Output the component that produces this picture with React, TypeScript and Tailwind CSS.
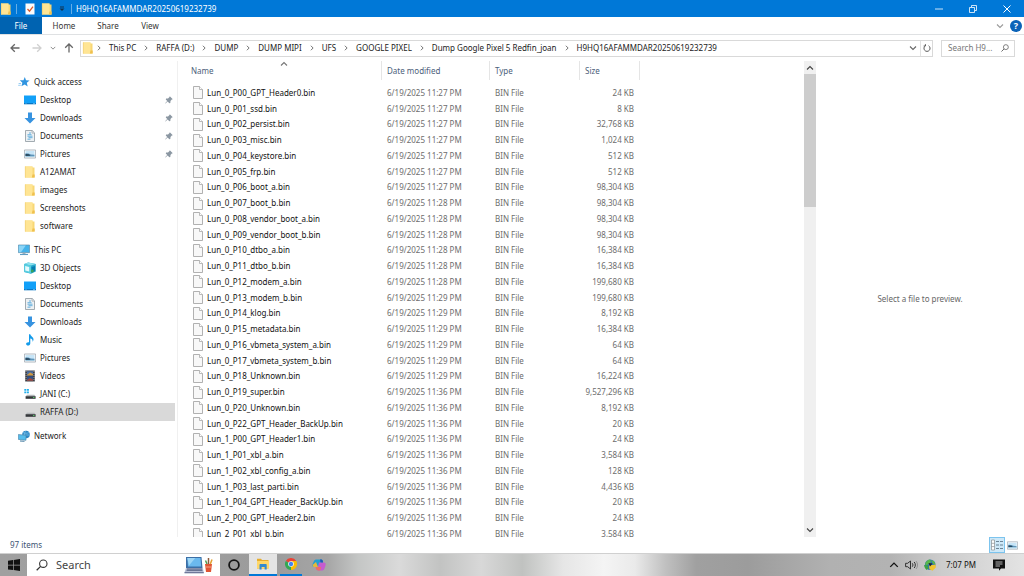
import type { ReactNode } from "react";

type IconProps = { className?: string };

const FolderIcon = ({ className = "size-3" }: IconProps) => (
  <svg viewBox="0 0 12 12" className={className} aria-hidden="true">
    <path d="M1 .5h7.500v1h2v10H1z" fill="#f8d775" />
    <path d="M1 .5h7.500v8.200l2 2.800H1z" fill="#ffe594" />
    <path d="M8.500 8.500h2.200v3H7.800z" fill="#efc04f" />
    <path d="M1.300 .5v11" stroke="#eecb6c" strokeWidth=".6" />
  </svg>
);

const StarIcon = () => (
  <svg viewBox="0 0 12 12" className="size-3" aria-hidden="true">
    <path d="M6.800 1l1.200 3.200 3.600.4-2.800 2.200.9 3.700-3-2-3.300 1.700 1-3.400L1.800 4.300l3.700-.100z" fill="#2f94e0" />
    <path d="M.6 7.500h2.400M.2 9.300h2.600" stroke="#7fc0ef" strokeWidth=".8" />
  </svg>
);

const DesktopIcon = () => (
  <svg viewBox="0 0 12 12" className="size-3" aria-hidden="true">
    <path d="M0 1.500h12v8.500H0z" fill="#12a0f8" />
    <path d="M0 9h12v1.300H0z" fill="#0876c4" />
    <path d="M1.500 9.600h1M9 9.600h2" stroke="#9bdcff" strokeWidth=".6" />
  </svg>
);

const DownloadIcon = () => (
  <svg viewBox="0 0 12 12" className="size-3" aria-hidden="true">
    <path d="M4 .5h4v5.500h3.500L6 11.600.5 6H4z" fill="#3793e0" />
  </svg>
);

const DocumentIcon = () => (
  <svg viewBox="0 0 12 12" className="size-3" aria-hidden="true">
    <path d="M1.500 .5h6.700l2.300 2.300v8.700h-9z" fill="#eef1f3" stroke="#8d979e" strokeWidth=".8" />
    <path d="M8 .7v2.400h2.400" fill="none" stroke="#8d979e" strokeWidth=".6" />
    <path d="M5 3h2M3.500 4.700h4M3.500 6.200h5M4.500 7.700h4M3.500 9.200h3" stroke="#56a9dd" strokeWidth=".9" />
  </svg>
);

const PictureIcon = ({ className = "size-3" }: IconProps) => (
  <svg viewBox="0 0 12 12" className={className} aria-hidden="true">
    <path d="M.4 2h11.200v8H.4z" fill="#fff" stroke="#9aa5ae" strokeWidth=".8" />
    <path d="M1.500 3h9v6h-9z" fill="#c7e5f7" />
    <path d="M1.500 5.200l3 .2 2.500 1 3.500.4v1.200h-9z" fill="#5d93b8" />
    <path d="M1.500 6l3.500.2 1.500 1.500-5 .3z" fill="#28485e" />
    <path d="M1.500 8.500h9" stroke="#9fc9e0" />
  </svg>
);

const PcIcon = () => (
  <svg viewBox="0 0 12 12" className="size-3" aria-hidden="true">
    <path d="M.4 1h11.200v7.600H.4z" fill="#44b3ea" stroke="#628da8" strokeWidth=".7" />
    <path d="M.8 1.400h7L3 8.200H.8z" fill="#8bd5f7" />
    <path d="M4.500 8.700h3v1.400h-3z" fill="#9fb2be" />
    <path d="M2 10.500h8" stroke="#5f9dc4" strokeWidth="1.100" />
  </svg>
);

const CubeIcon = () => (
  <svg viewBox="0 0 12 12" className="size-3" aria-hidden="true">
    <path d="M.2 2l4-1.500L11.800 2v7.500L7 11.700.2 10z" fill="#29a8cc" />
    <path d="M.2 2l4-1.500L11.800 2 7 3.600z" fill="#8be1ee" />
    <path d="M.2 2L7 3.600v8L.2 10z" fill="#58cde0" />
    <path d="M1.200 4l4 .9v4.600l-4-.9z" fill="#e4fafd" />
    <path d="M7.500 5l3.500-1v5l-3.500 1.400z" fill="#087cb0" />
    <circle cx="8.300" cy="9" r="1.400" fill="#3ba455" />
  </svg>
);

const MusicIcon = () => (
  <svg viewBox="0 0 12 12" className="size-3" aria-hidden="true">
    <path d="M5 .3h1.300c.3 2 3.200 2.700 3.200 5.200 0 1-.4 1.700-1 2.300.5-2-.7-3-2.200-3.300v4.700c0 1.400-1 2.400-2.300 2.400-1.100 0-1.900-.6-1.900-1.500C2.100 8.800 3.400 8 5 8.300z" fill="#149bea" />
  </svg>
);

const VideoIcon = () => (
  <svg viewBox="0 0 12 12" className="size-3" aria-hidden="true">
    <path d="M1.200 .5h9.600v11H1.200z" fill="#3b3d42" />
    <path d="M2 1v10.500M10 1v10.500" stroke="#c9ced3" strokeWidth=".7" strokeDasharray="1 1" />
    <path d="M3 1.200h6v4.300H3z" fill="#4e6fa0" />
    <path d="M3 6.300h6v4.500H3z" fill="#31538b" />
    <path d="M3 5l3-2.500L9 4v1.500H3z" fill="#d19a3e" />
    <path d="M3 10l3-2 3 1.500v1.300H3z" fill="#a24a38" />
  </svg>
);

const DriveIcon = ({ system = false }: { system?: boolean }) => (
  <svg viewBox="0 0 12 12" className="size-3" aria-hidden="true">
    {system && <path d="M.3 1h2v1.800h-2zM2.900 1h2v1.800h-2zM.3 3.400h2v1.800h-2zM2.900 3.400h2v1.800h-2z" fill="#22aeea" />}
    <path d="M3 6.800h7.300l1.200 1.500H1.800z" fill="#b4b8ba" />
    <path d="M1.600 8.200h10v2.600h-10z" fill="#35383b" />
    <path d="M9 9.500h1.500" stroke="#55d368" strokeWidth=".9" />
  </svg>
);

const NetworkIcon = () => (
  <svg viewBox="0 0 12 12" className="size-3" aria-hidden="true">
    <circle cx="8" cy="4.500" r="3.800" fill="#2d87c4" />
    <path d="M5 2.500c2 1 4 1 6 0M4.300 5h7.500M8 .7c-2 2-2 5 0 7.600" fill="none" stroke="#8fd0f2" strokeWidth=".6" />
    <path d="M.3 4.500l7.700.8v5l-7.700-.9z" fill="#56bdec" stroke="#4a7fa2" strokeWidth=".6" />
    <path d="M2 11l4.500.3" stroke="#4a7fa2" />
  </svg>
);

const PinIcon = () => (
  <svg viewBox="0 0 10 10" className="size-2.5" aria-hidden="true">
    <path d="M5.800 1.300l3 3-1 .3-1.300 1.400-.2 2-1 .2-1.600-1.600-2.300 2-.3-.3 2.100-2.400-1.400-1.300.3-1 1.900-.2L5.500 2z" fill="#8b97a2" />
  </svg>
);

const FileIcon = () => (
  <svg viewBox="0 0 10 13" className="h-[13px] w-2.5 shrink-0" aria-hidden="true">
    <path d="M.5 .5h6l3 3v9h-9z" fill="#f8f8f8" stroke="#a8a8a8" strokeWidth=".9" />
    <path d="M6.500 .5v3h3" fill="#fff" stroke="#a8a8a8" strokeWidth=".8" />
  </svg>
);

const Chevron = ({ className }: { className: string }) => (
  <svg viewBox="0 0 8 8" className={className} aria-hidden="true">
    <path d="M1 2.500l3 3 3-3" fill="none" stroke="currentColor" strokeWidth="1.100" />
  </svg>
);

const ArrowLeft = ({ className }: { className: string }) => (
  <svg viewBox="0 0 10 10" className={className} aria-hidden="true">
    <path d="M9.500 5H1M4.800 1.200L1 5l3.800 3.800" fill="none" stroke="currentColor" strokeWidth="1.300" />
  </svg>
);

const Magnifier = ({ className }: { className: string }) => (
  <svg viewBox="0 0 12 12" className={className} aria-hidden="true">
    <circle cx="7.300" cy="4.700" r="3.700" fill="none" stroke="currentColor" strokeWidth="1.100" />
    <path d="M4.600 7.400L.7 11.300" stroke="currentColor" strokeWidth="1.300" />
  </svg>
);

const LaptopIcon = () => (
  <svg viewBox="0 0 29 18" className="h-[18px] w-[29px] shrink-0" aria-hidden="true">
    <path d="M2 1h15.500l1 11H2z" fill="#3c6fa6" />
    <path d="M3.300 2h13.200l.7 8.500H4z" fill="#6bb9ee" />
    <path d="M3.300 2h8L5 9.500z" fill="#9ed6f6" />
    <path d="M2 12h17l.7 4.500H.5z" fill="#b5bcd2" />
    <path d="M3 13h15M2.600 14.300h15.800" stroke="#4c587a" strokeWidth=".9" />
    <path d="M.5 16h19.300v1.300H.5z" fill="#6f789a" />
    <path d="M21 8h7l-1 8h-5z" fill="#e05434" />
    <path d="M21.500 11h6" stroke="#f5a183" />
    <path d="M23 8l-1.500-3.500" stroke="#4c9b51" strokeWidth="1.500" />
    <path d="M24.500 8V2" stroke="#8b5a3a" strokeWidth="1.500" />
    <path d="M26.300 8l1.700-4.500" stroke="#e3a12f" strokeWidth="1.500" />
  </svg>
);

const ChromeIcon = () => (
  <svg viewBox="0 0 24 24" className="size-3" aria-hidden="true">
    <path d="M12 12L1.600 6A12 12 0 0 1 22.400 6z" fill="#ea4335" />
    <path d="M12 12L22.400 6A12 12 0 0 1 12 24z" fill="#fbbc05" />
    <path d="M12 12v12A12 12 0 0 1 1.600 6z" fill="#34a853" />
    <path d="M12 6h10.400a12 12 0 0 1 .6 1.200L16.500 15z" fill="#fbbc05" />
    <circle cx="12" cy="12" r="5.600" fill="#fff" />
    <circle cx="12" cy="12" r="4.400" fill="#4285f4" />
  </svg>
);

const ExplorerIcon = () => (
  <svg viewBox="0 0 12 12" className="size-3" aria-hidden="true">
    <path d="M0 .8h4l1 1.200h6.500v8.500H0z" fill="#e8ad2d" />
    <path d="M0 3h12v7.500H0z" fill="#ffd768" />
    <path d="M2.500 11.500V7c0-.7.400-1 1-1h5.200c.6 0 1 .3 1 1v4.500H7.600V9H4.600v2.500z" fill="#3289cf" />
  </svg>
);

const CopilotIcon = () => (
  <svg viewBox="0 0 14 12" className="h-3 w-3.5" aria-hidden="true">
    <path d="M5 .5h4c1 0 1.500.5 1.800 1.500L11 3.500H8L6.500 8H2C.5 8 0 7 .6 5L2 2C2.500.9 3.500.5 5 .5z" fill="#219fd2" />
    <path d="M1 5.500L4 3l2 5H2C.8 8 .3 7 1 5.500z" fill="#e7b83a" />
    <path d="M7 3.500h4.500c2 0 2.500 1.300 2 3L12.500 9.500c-.5 1.500-1.300 2-3 2H6.500c-1.400 0-2-.7-2.500-2L3.600 8h2.300z" fill="#c55bd0" />
    <path d="M8 .5h1c1 0 1.500.5 1.800 1.500l.3 1.500H8.500z" fill="#2356b8" />
    <path d="M3.600 8h5.500l-1 3.500H6.500c-1.400 0-2-.7-2.500-2z" fill="#ef6e63" />
  </svg>
);

const GlobeIcon = () => (
  <svg viewBox="0 0 12 12" className="size-3" aria-hidden="true">
    <circle cx="6.200" cy="5.800" r="5.300" fill="#2e76b8" />
    <path d="M1 5c1-3 3-4.500 5-4.500L7 3 4.500 5.500 2 6zM7 1l3 1.200 1.500 3L9 5z" fill="#5ab84a" />
    <path d="M0 6l4 .500.500 3L2.500 11C1.500 10 .2 8 0 6z" fill="#3ca241" />
    <path d="M5 6.500l6.500-1 .3 3-3.300 3.200-3-1.500z" fill="#f0c530" />
    <path d="M4.500 4l4 .5-2.500 3z" fill="#1c242e" />
  </svg>
);

type NavEntry = { label: string; icon: ReactNode; pinned?: boolean; root?: boolean; selected?: boolean };

const navGroups: NavEntry[][] = [
  [
    { label: "Quick access", icon: <StarIcon />, root: true },
    { label: "Desktop", icon: <DesktopIcon />, pinned: true },
    { label: "Downloads", icon: <DownloadIcon />, pinned: true },
    { label: "Documents", icon: <DocumentIcon />, pinned: true },
    { label: "Pictures", icon: <PictureIcon />, pinned: true },
    { label: "A12AMAT", icon: <FolderIcon /> },
    { label: "images", icon: <FolderIcon /> },
    { label: "Screenshots", icon: <FolderIcon /> },
    { label: "software", icon: <FolderIcon /> },
  ],
  [
    { label: "This PC", icon: <PcIcon />, root: true },
    { label: "3D Objects", icon: <CubeIcon /> },
    { label: "Desktop", icon: <DesktopIcon /> },
    { label: "Documents", icon: <DocumentIcon /> },
    { label: "Downloads", icon: <DownloadIcon /> },
    { label: "Music", icon: <MusicIcon /> },
    { label: "Pictures", icon: <PictureIcon /> },
    { label: "Videos", icon: <VideoIcon /> },
    { label: "JANI (C:)", icon: <DriveIcon system /> },
    { label: "RAFFA (D:)", icon: <DriveIcon />, selected: true },
  ],
  [{ label: "Network", icon: <NetworkIcon />, root: true }],
];

const crumbs = [
  "This PC",
  "RAFFA (D:)",
  "DUMP",
  "DUMP MIPI",
  "UFS",
  "GOOGLE PIXEL",
  "Dump Google Pixel 5 Redfin_joan",
  "H9HQ16AFAMMDAR20250619232739",
];

const files: [string, string, string][] = [
  ["Lun_0_P00_GPT_Header0.bin", "11:27", "24"],
  ["Lun_0_P01_ssd.bin", "11:27", "8"],
  ["Lun_0_P02_persist.bin", "11:27", "32,768"],
  ["Lun_0_P03_misc.bin", "11:27", "1,024"],
  ["Lun_0_P04_keystore.bin", "11:27", "512"],
  ["Lun_0_P05_frp.bin", "11:27", "512"],
  ["Lun_0_P06_boot_a.bin", "11:27", "98,304"],
  ["Lun_0_P07_boot_b.bin", "11:28", "98,304"],
  ["Lun_0_P08_vendor_boot_a.bin", "11:28", "98,304"],
  ["Lun_0_P09_vendor_boot_b.bin", "11:28", "98,304"],
  ["Lun_0_P10_dtbo_a.bin", "11:28", "16,384"],
  ["Lun_0_P11_dtbo_b.bin", "11:28", "16,384"],
  ["Lun_0_P12_modem_a.bin", "11:28", "199,680"],
  ["Lun_0_P13_modem_b.bin", "11:29", "199,680"],
  ["Lun_0_P14_klog.bin", "11:29", "8,192"],
  ["Lun_0_P15_metadata.bin", "11:29", "16,384"],
  ["Lun_0_P16_vbmeta_system_a.bin", "11:29", "64"],
  ["Lun_0_P17_vbmeta_system_b.bin", "11:29", "64"],
  ["Lun_0_P18_Unknown.bin", "11:29", "16,224"],
  ["Lun_0_P19_super.bin", "11:36", "9,527,296"],
  ["Lun_0_P20_Unknown.bin", "11:36", "8,192"],
  ["Lun_0_P22_GPT_Header_BackUp.bin", "11:36", "20"],
  ["Lun_1_P00_GPT_Header1.bin", "11:36", "24"],
  ["Lun_1_P01_xbl_a.bin", "11:36", "3,584"],
  ["Lun_1_P02_xbl_config_a.bin", "11:36", "128"],
  ["Lun_1_P03_last_parti.bin", "11:36", "4,436"],
  ["Lun_1_P04_GPT_Header_BackUp.bin", "11:36", "20"],
  ["Lun_2_P00_GPT_Header2.bin", "11:36", "24"],
  ["Lun_2_P01_xbl_b.bin", "11:36", "3,584"],
];

function TitleBar() {
  return (
    <header className="flex h-[17px] shrink-0 items-center bg-[#0078d7] text-white">
      <div className="flex items-center">
        <FolderIcon />
        <span className="ml-1 h-2.5 w-px bg-white/40" />
        <button aria-label="Properties" className="ml-2">
          <svg viewBox="0 0 10 12" className="h-3 w-2.5" aria-hidden="true">
            <path d="M.5 .5h9v11h-9z" fill="#fdfbfa" />
            <path d="M2.500 6l2 2.200 3.500-4.500" fill="none" stroke="#dc5a2c" strokeWidth="1.300" />
          </svg>
        </button>
        <button aria-label="New folder" className="ml-1.5">
          <FolderIcon />
        </button>
        <button aria-label="Customize toolbar" className="ml-1.5 text-[#12304d]">
          <svg viewBox="0 0 6 6" className="size-1.5" aria-hidden="true">
            <path d="M1 1h4" stroke="currentColor" />
            <path d="M.5 2.500h5L3 5z" fill="currentColor" />
          </svg>
        </button>
        <span className="ml-1.5 h-2.5 w-px bg-white/40" />
      </div>
      <h1 className="ml-1">H9HQ16AFAMMDAR20250619232739</h1>
      <div className="ml-auto flex h-full">
        <button aria-label="Minimize" className="flex w-[34px] items-center justify-center">
          <svg viewBox="0 0 8 8" className="size-2" aria-hidden="true"><path d="M0 4h8" stroke="#fff" strokeWidth=".8" /></svg>
        </button>
        <button aria-label="Restore" className="flex w-[34px] items-center justify-center">
          <svg viewBox="0 0 8 8" className="size-2" aria-hidden="true">
            <path d="M.5 2.500h5v5h-5zM2.500 2V.5h5v5H6" fill="none" stroke="#fff" strokeWidth=".8" />
          </svg>
        </button>
        <button aria-label="Close" className="flex w-[34px] items-center justify-center">
          <svg viewBox="0 0 8 8" className="size-2" aria-hidden="true"><path d="M.5 .5l7 7M7.500 .5l-7 7" stroke="#fff" /></svg>
        </button>
      </div>
    </header>
  );
}

function RibbonTabs() {
  return (
    <nav className="flex h-[18px] shrink-0 items-center border-b border-[#dfe1e3]">
      <button className="h-full w-[42px] bg-[#0063b1] text-white">File</button>
      <button className="h-full w-11 text-[#333]">Home</button>
      <button className="h-full w-11 text-[#333]">Share</button>
      <button className="h-full w-10 text-[#333]">View</button>
      <button aria-label="Expand the ribbon" className="ml-auto text-[#9a9a9a]">
        <Chevron className="size-2" />
      </button>
      <button aria-label="Help" className="mr-0.5 ml-1.5 flex size-3 items-center justify-center rounded-full bg-[#0b63b8] text-[9px] font-bold text-white">
        ?
      </button>
    </nav>
  );
}

function AddressBar() {
  return (
    <div className="flex h-[26px] shrink-0 items-center pr-[9px] pl-2.5">
      <button aria-label="Back" className="text-[#666]"><ArrowLeft className="size-2.5" /></button>
      <button aria-label="Forward" className="ml-3 text-[#d0d0d0]"><ArrowLeft className="size-2.5 rotate-180" /></button>
      <button aria-label="Recent locations" className="ml-2 text-[#777]"><Chevron className="size-1.5" /></button>
      <button aria-label="Up" className="ml-2 text-[#666]"><ArrowLeft className="size-2.5 rotate-90" /></button>
      <div className="ml-1.5 flex h-[17px] min-w-0 flex-1 items-center border border-[#d9d9d9]">
        <span className="ml-px flex"><FolderIcon /></span>
        <ol className="ml-0.5 flex items-center gap-[7px]">
          {crumbs.map((crumb) => (
            <li key={crumb} className="flex items-center gap-[7px]">
              <Chevron className="size-1.5 -rotate-90 text-[#555]" />
              <a href="#" className="whitespace-nowrap">{crumb}</a>
            </li>
          ))}
        </ol>
        <button aria-label="Previous locations" className="ml-auto flex w-3.5 justify-center text-[#666]">
          <Chevron className="size-2" />
        </button>
        <button aria-label="Refresh" className="flex h-full w-3 items-center justify-center border-l border-[#e2e2e2] text-[#555]">
          <svg viewBox="0 0 10 10" className="size-2" aria-hidden="true">
            <path d="M7 2.200A3.800 3.800 0 1 1 3 2.200M3 .2v2.300H.8" fill="none" stroke="currentColor" strokeWidth="1.200" />
          </svg>
        </button>
      </div>
      <label className="ml-2 flex h-[17px] w-[74px] items-center border border-[#d9d9d9] pl-1.5">
        <input aria-label="Search folder" placeholder="Search H9..." className="w-[51px] min-w-0 outline-none placeholder:text-[#777]" />
        <Magnifier className="ml-0.5 size-2 text-[#555]" />
      </label>
    </div>
  );
}

function Sidebar() {
  return (
    <aside className="flex w-[178px] shrink-0 flex-col gap-1.5 border-r border-[#f0f0f0] pt-3">
      {navGroups.map((group) => (
        <ul key={group[0].label}>
          {group.map((entry) => (
            <li key={entry.label} className={entry.selected ? "mr-0.5 bg-[#d9d9d9]" : "mr-0.5"}>
              <a
                href="#"
                className={
                  entry.root
                    ? "flex h-[18px] items-center gap-1 pl-[18px]"
                    : "flex h-[18px] items-center gap-1 pl-6"
                }
              >
                {entry.icon}
                <span>{entry.label}</span>
                {entry.pinned && (
                  <span className="mr-px ml-auto"><PinIcon /></span>
                )}
              </a>
            </li>
          ))}
        </ul>
      ))}
    </aside>
  );
}

function FileTable() {
  const head = "flex h-[19px] items-center border-r border-[#e5e5e5] font-normal text-[#4c607a]";
  return (
    <div className="min-w-0 flex-1 overflow-hidden">
      <table className="h-[481px] w-[462px] table-fixed border-collapse text-left">
        <colgroup>
          <col className="w-[204px]" />
          <col className="w-[108px]" />
          <col className="w-[90px]" />
          <col className="w-[60px]" />
        </colgroup>
        <thead>
          <tr className="h-6 align-top">
            <th scope="col" aria-sort="ascending" className="relative p-0">
              <Chevron className="absolute -top-px left-[102px] size-2 rotate-180 text-[#777]" />
              <div className={head + " pl-[13px]"}>Name</div>
            </th>
            <th scope="col" className="p-0"><div className={head + " pl-[5px]"}>Date modified</div></th>
            <th scope="col" className="p-0"><div className={head + " pl-[5px]"}>Type</div></th>
            <th scope="col" className="p-0"><div className={head + " pl-[5px]"}>Size</div></th>
          </tr>
        </thead>
        <tbody className="text-[#6d6d6d]">
          {files.map(([name, time, size]) => (
            <tr key={name} className="whitespace-nowrap">
              <td className="p-0 pl-[15px] text-[#111]">
                <span className="flex items-center gap-1"><FileIcon />{name}</span>
              </td>
              <td className="p-0 pl-[5px]">6/19/2025 {time} PM</td>
              <td className="p-0 pl-[5px]">BIN File</td>
              <td className="p-0 pr-1.5 text-right">{size} KB</td>
            </tr>
          ))}
        </tbody>
      </table>
    </div>
  );
}

function ScrollBar() {
  return (
    <div className="flex w-3 shrink-0 flex-col bg-[#f0f0f0] pt-px">
      <button aria-label="Scroll up" className="flex h-3 items-center justify-center text-[#444]">
        <Chevron className="size-2 rotate-180" />
      </button>
      <div className="h-[133px] bg-[#cdcdcd]" />
      <button aria-label="Scroll down" className="mt-auto flex h-3.5 items-center justify-center text-[#444]">
        <Chevron className="size-2" />
      </button>
    </div>
  );
}

function StatusBar() {
  return (
    <footer className="flex h-4 shrink-0 items-center pr-1.5 pl-2.5 text-[#3d5473]">
      <span>97 items</span>
      <button aria-label="Details view" className="ml-auto flex h-4 w-4 items-center justify-center border border-[#7cc4ee] bg-[#cde8f8]">
        <svg viewBox="0 0 12 12" className="size-3" aria-hidden="true">
          <path d="M.5 1h3v10h-3zM.5 4.300h3M.5 7.600h3" fill="#fff" stroke="#8a8f94" strokeWidth=".7" />
          <path d="M5 2.500h3M9 2.500h3M5 6h3M9 6h3M5 9.500h3M9 9.500h3" stroke="#61788a" strokeWidth=".9" />
        </svg>
      </button>
      <button aria-label="Large icons view" className="ml-0.5"><PictureIcon className="size-[11px]" /></button>
    </footer>
  );
}

function Taskbar() {
  return (
    <div className="flex h-[23px] shrink-0 items-stretch border-t border-[#d0d0d0] bg-[linear-gradient(to_right,#a0a0a0_0%,#9c9c9c_27%,#a6a6a6_32%,#c4c6c5_35%,#dadada_39%,#c2c3c2_43%,#d8d8d8_47%,#c0c2c0_51%,#e6e6e6_55%,#f4f4f4_59%,#eaeaea_62%,#c0c0c0_65%,#a0a0a0_68%,#9c9c9c_73%,#b1b1b1_81%,#b3b3b3_87%,#cccccc_92%,#e3e3e3_100%)]">
      <button aria-label="Start" className="flex w-[27px] items-center justify-center">
        <svg viewBox="0 0 12 12" className="size-3" aria-hidden="true">
          <path d="M0 1.700l5-.7v4.700H0zM5.700.9L12 0v5.700H5.700zM0 6.400h5v4.700l-5-.7zM5.700 6.400H12V12l-6.300-.9z" fill="#111" />
        </svg>
      </button>
      <label className="flex w-[193px] items-center bg-white pr-[7px] pl-[9px]">
        <Magnifier className="size-3 shrink-0 text-[#333]" />
        <input aria-label="Search" placeholder="Search" className="ml-2 min-w-0 flex-1 text-[11px] outline-none placeholder:text-[#444]" />
        <LaptopIcon />
      </label>
      <button aria-label="Cortana" className="flex w-7 items-center justify-center">
        <svg viewBox="0 0 12 12" className="size-3" aria-hidden="true"><circle cx="6" cy="6" r="4.900" fill="none" stroke="#151515" strokeWidth="1.800" /></svg>
      </button>
      <button aria-label="File Explorer" className="ml-px flex w-7 items-center justify-center border-b-2 border-[#0078d7] bg-[#e4e4e4]"><ExplorerIcon /></button>
      <button aria-label="Chrome" className="mx-[3px] flex w-[22px] items-center justify-center border-b-2 border-[#0078d7]"><ChromeIcon /></button>
      <button aria-label="Copilot" className="flex w-7 items-center justify-center"><CopilotIcon /></button>
      <div className="ml-auto flex items-center pr-[19px] text-[#111]">
        <button aria-label="Show hidden icons"><Chevron className="size-2.5 rotate-180" /></button>
        <button aria-label="Volume" className="ml-1.5">
          <svg viewBox="0 0 13 12" className="h-3 w-[13px]" aria-hidden="true">
            <path d="M.6 4.300h2L5.500 2v8L2.600 7.700h-2z" fill="none" stroke="#222" strokeWidth=".9" />
            <path d="M7.300 4.300c.8 1 .8 2.400 0 3.400M9.200 3c1.500 1.800 1.500 4.200 0 6" fill="none" stroke="#222" strokeWidth=".9" />
            <path d="M11 2c2 2.500 2 5.500 0 8" fill="none" stroke="#888" strokeWidth=".8" />
          </svg>
        </button>
        <button aria-label="Download manager" className="ml-1.5"><GlobeIcon /></button>
        <time className="ml-2.5">7:07 PM</time>
        <button aria-label="Notifications" className="ml-[17px]">
          <svg viewBox="0 0 12 12" className="size-3" aria-hidden="true">
            <path d="M0 .5h12v9H8l-2 2.300V9.500H0z" fill="#111" />
            <path d="M2.500 3h7M2.500 5h7M2.500 7h4.500" stroke="#ddd" strokeWidth=".8" />
          </svg>
        </button>
      </div>
    </div>
  );
}

export default function App() {
  return (
    <div className="flex h-screen flex-col overflow-hidden bg-white font-['Noto_Sans','Open_Sans',sans-serif] text-[8px] leading-3 text-[#222]">
      <TitleBar />
      <RibbonTabs />
      <AddressBar />
      <main className="flex min-h-0 flex-1">
        <Sidebar />
        <FileTable />
        <ScrollBar />
        <section aria-label="Preview" className="flex w-[208px] shrink-0 items-center justify-center text-[#666]">
          <p>Select a file to preview.</p>
        </section>
      </main>
      <StatusBar />
      <Taskbar />
    </div>
  );
}
